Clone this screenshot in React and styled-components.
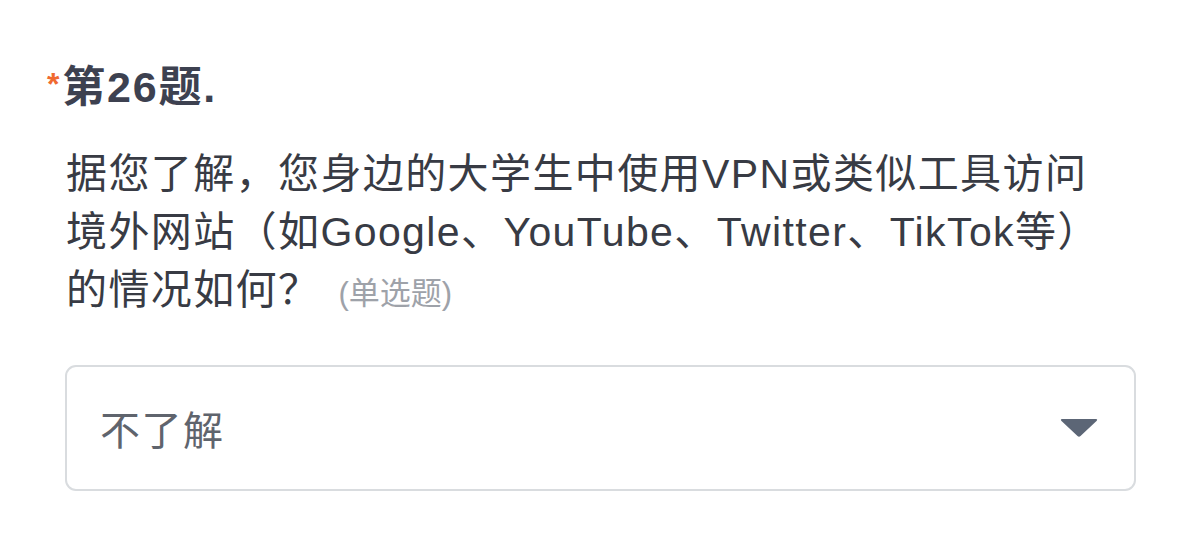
import styled, { createGlobalStyle } from "styled-components"

const GlobalStyle = createGlobalStyle`
    body {
        margin: 0;
        background: #ffffff;
        font-family: "Liberation Sans", "Noto Sans CJK SC", sans-serif;
    }
`

const Page = styled.div`
    width: 1200px;
    height: 556px;
    box-sizing: border-box;
    padding: 61px 64px 0 47px;
    background: #ffffff;
`

const Title = styled.div`
    display: flex;
    align-items: baseline;
    font-size: 43px;
    font-weight: 700;
    line-height: 52px;
    letter-spacing: 1.8px;
    color: #3d4150;
`

const Star = styled.span`
    color: #f06a30;
    font-size: 32px;
    font-weight: 700;
    margin-right: 1px;
    align-self: flex-start;
    margin-top: 8px;
    line-height: 30px;
`

const Question = styled.p`
    margin: 32px 0 0 19px;
    font-size: 41px;
    line-height: 58px;
    letter-spacing: 1.4px;
    color: #383b44;
`

const Hint = styled.span`
    font-size: 31px;
    letter-spacing: 0;
    color: #9ea2a9;
    margin-left: 18px;
`

const Select = styled.div`
    margin: 42px 0 0 18px;
    height: 126px;
    box-sizing: border-box;
    border: 2px solid #d9dcdf;
    border-radius: 11px;
    display: flex;
    align-items: center;
    justify-content: space-between;
    padding: 0 36px 0 33px;
`

const Value = styled.span`
    font-size: 40px;
    letter-spacing: 1.5px;
    color: #5f646d;
`

const Arrow = styled.svg`
    width: 38px;
    height: 20px;
`

const App = () => {
  return (
    <Page>
        <GlobalStyle />
        <Title><Star>*</Star>第26题.</Title>
        <Question>
            据您了解，您身边的大学生中使用VPN或类似工具访问<br />
            境外网站（如Google、YouTube、Twitter、TikTok等）<br />
            的情况如何？<Hint>(单选题)</Hint>
        </Question>
        <Select>
            <Value>不了解</Value>
            <Arrow viewBox="0 0 38 20">
                <path d="M2 1 H36 Q38 1 36.5 3 L20.5 18 Q19 19.5 17.5 18 L1.5 3 Q0 1 2 1 Z" fill="#5c6676" />
            </Arrow>
        </Select>
    </Page>
  )
}

export default App
